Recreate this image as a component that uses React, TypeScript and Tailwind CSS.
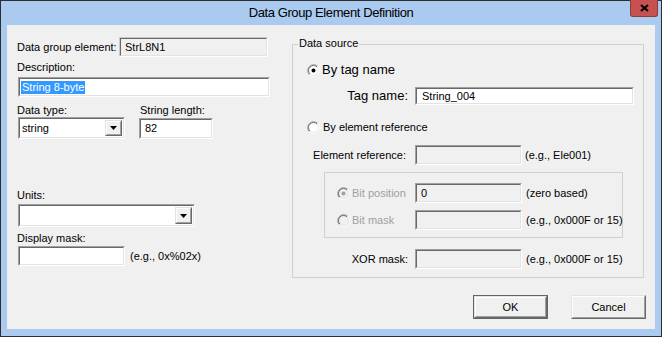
import React from "react";

const FONT = "font-['Liberation_Sans',Arial,sans-serif]";

function Sunken({
  className = "",
  disabled = false,
  children,
}: {
  className?: string;
  disabled?: boolean;
  children?: React.ReactNode;
}) {
  return (
    <div
      className={`shrink-0 border border-t-[#a0a0a0] border-l-[#a0a0a0] border-b-white border-r-white ${className}`}
    >
      <div
        className={`flex h-full w-full items-center border border-t-[#696969] border-l-[#696969] border-b-[#e3e3e3] border-r-[#e3e3e3] ${
          disabled ? "bg-[#f0f0f0]" : "bg-white"
        }`}
      >
        {children}
      </div>
    </div>
  );
}

function DropButton() {
  return (
    <div className="h-full w-[17px] border border-t-[#e3e3e3] border-l-[#e3e3e3] border-b-[#696969] border-r-[#696969]">
      <div className="flex h-full w-full items-center justify-center border border-t-white border-l-white border-b-[#a0a0a0] border-r-[#a0a0a0] bg-[#f0f0f0]">
        <svg width="7" height="4" viewBox="0 0 7 4">
          <path d="M0 0 H7 L3.5 4 Z" fill="#000" />
        </svg>
      </div>
    </div>
  );
}

function Combo({ className, value }: { className: string; value?: string }) {
  return (
    <Sunken className={className}>
      <div className="flex-1 pl-[2px] text-[11px] leading-[13px] text-black">{value}</div>
      <div className="h-full py-[1px] pr-[1px]">
        <DropButton />
      </div>
    </Sunken>
  );
}

function Radio({ checked, disabled }: { checked?: boolean; disabled?: boolean }) {
  return (
    <svg width="13" height="13" viewBox="0 0 13 13" className="shrink-0">
      <circle cx="6.5" cy="6.5" r="6" fill={disabled ? "#f0f0f0" : "#fff"} />
      <path d="M2.26 10.74 A6 6 0 0 1 10.74 2.26" stroke="#a0a0a0" fill="none" />
      <path d="M10.74 2.26 A6 6 0 0 1 2.26 10.74" stroke="#fff" fill="none" />
      <path d="M2.96 10.04 A5 5 0 0 1 10.04 2.96" stroke="#696969" fill="none" />
      <path d="M10.04 2.96 A5 5 0 0 1 2.96 10.04" stroke="#e3e3e3" fill="none" />
      {checked && <circle cx="6.5" cy="6.5" r="2" fill={disabled ? "#a0a0a0" : "#000"} />}
    </svg>
  );
}

function Btn({ label, isDefault }: { label: string; isDefault?: boolean }) {
  const inner = (
    <div className="h-full w-full border border-t-[#e3e3e3] border-l-[#e3e3e3] border-b-[#696969] border-r-[#696969]">
      <div className="flex h-full w-full items-center justify-center border border-t-white border-l-white border-b-[#a0a0a0] border-r-[#a0a0a0] bg-[#f0f0f0] text-[11px] leading-[13px] text-black">
        {label}
      </div>
    </div>
  );
  return (
    <div className={`h-[24px] w-[75px] ${isDefault ? "border border-[#646464]" : ""}`}>{inner}</div>
  );
}

export default function App() {
  return (
    <div className={`${FONT} h-[337px] w-[662px] border border-[#2e2e2e] bg-[#aacbef]`}>
      {/* Title bar */}
      <div className="relative flex h-[24px] items-center justify-center">
        <span className="text-[13px] leading-[16px] tracking-[-0.4px] text-black">
          Data Group Element Definition
        </span>
        <div className="absolute right-[3px] top-[-1px] flex h-[17px] w-[28px] items-center justify-center rounded-b-[3px] border border-t-0 border-[#8e3a3a] bg-[#c75050]">
          <svg width="9" height="8" viewBox="0 0 9 8">
            <path d="M1 1 L8 7 M8 1 L1 7" stroke="#000" strokeWidth="2" />
          </svg>
        </div>
      </div>

      {/* Client area */}
      <div className="mx-[6px] flex h-[304px] flex-col whitespace-nowrap bg-[#f0f0f0] pl-[10px] pt-[12px] text-[11px] leading-[13px] text-black">
        <div className="flex">
          {/* Left column */}
          <div className="flex w-[253px] shrink-0 flex-col">
            <div className="flex h-[20px] items-center">
              <div className="w-[102px]">Data group element:</div>
              <Sunken className="h-[20px] w-[149px] !border-t-[#c8c8c8] !border-l-[#c8c8c8]" disabled>
                <span className="pl-[4px]">StrL8N1</span>
              </Sunken>
            </div>
            <div className="mt-[4px]">Description:</div>
            <Sunken className="ml-[1px] mt-[3px] h-[20px] w-[252px]">
              <span className="ml-[1px] bg-[#3399ff] px-[1px] text-white">String 8-byte</span>
            </Sunken>
            <div className="mt-[7px] flex">
              <div className="w-[123px]">Data type:</div>
              <div>String length:</div>
            </div>
            <div className="flex">
              <Combo className="ml-[1px] h-[22px] w-[107px]" value="string" />
              <Sunken className="ml-[14px] mt-[1px] h-[21px] w-[74px]">
                <span className="pl-[4px]">82</span>
              </Sunken>
            </div>
            <div className="mt-[50px]">Units:</div>
            <Combo className="ml-[1px] mt-[2px] h-[23px] w-[177px]" />
            <div className="mt-[5px]">Display mask:</div>
            <div className="mt-[1px] flex items-center">
              <Sunken className="ml-[1px] h-[20px] w-[107px]" />
              <span className="ml-[5px]">(e.g., 0x%02x)</span>
            </div>
          </div>

          {/* Data source group */}
          <div className="relative ml-[22px] mt-[7px] flex h-[234px] w-[352px] shrink-0 flex-col border border-[#d0d0d0]">
            <div className="absolute left-[5px] top-[-8px] bg-[#f0f0f0] px-[1px]">Data source</div>

            <div className="ml-[14px] mt-[17px] flex h-[16px] items-center">
              <Radio checked />
              <span className="ml-[2px] text-[13px] leading-[16px]">By tag name</span>
            </div>

            <div className="mt-[9px] flex h-[18px] items-center">
              <div className="w-[122px] pr-[7px] text-right text-[13px] leading-[16px]">Tag name:</div>
              <Sunken className="h-[18px] w-[219px]">
                <span className="pl-[5px]">String_004</span>
              </Sunken>
            </div>

            <div className="ml-[14px] mt-[14px] flex h-[16px] items-center">
              <Radio />
              <span className="ml-[3px]">By element reference</span>
            </div>

            <div className="mt-[10px] flex h-[20px] items-center">
              <div className="w-[122px] pr-[9px] text-right">Element reference:</div>
              <Sunken className="h-[20px] w-[107px]" disabled />
              <span className="ml-[3px]">(e.g., Ele001)</span>
            </div>

            <div className="ml-[31px] mt-[7px] flex h-[66px] w-[299px] flex-col border border-[#d0d0d0]">
              <div className="mt-[10px] flex h-[20px] items-center">
                <div className="flex w-[90px] shrink-0 items-center pl-[12px]">
                  <Radio checked disabled />
                  <span className="ml-[2px] text-[#a0a0a0]">Bit position</span>
                </div>
                <Sunken className="h-[20px] w-[107px]" disabled>
                  <span className="pl-[4px]">0</span>
                </Sunken>
                <span className="ml-[4px]">(zero based)</span>
              </div>
              <div className="mt-[7px] flex h-[20px] items-center">
                <div className="flex w-[90px] shrink-0 items-center pl-[12px]">
                  <Radio disabled />
                  <span className="ml-[2px] text-[#a0a0a0]">Bit mask</span>
                </div>
                <Sunken className="h-[20px] w-[107px]" disabled />
                <span className="ml-[4px]">(e.g., 0x000F or 15)</span>
              </div>
            </div>

            <div className="mt-[11px] flex h-[20px] items-center">
              <div className="w-[122px] pr-[7px] text-right">XOR mask:</div>
              <Sunken className="h-[20px] w-[107px]" disabled />
              <span className="ml-[4px]">(e.g., 0x000F or 15)</span>
            </div>
          </div>
        </div>

        {/* Buttons */}
        <div className="mr-[9px] mt-[17px] flex justify-end gap-[23px]">
          <Btn label="OK" isDefault />
          <Btn label="Cancel" />
        </div>
      </div>
    </div>
  );
}
